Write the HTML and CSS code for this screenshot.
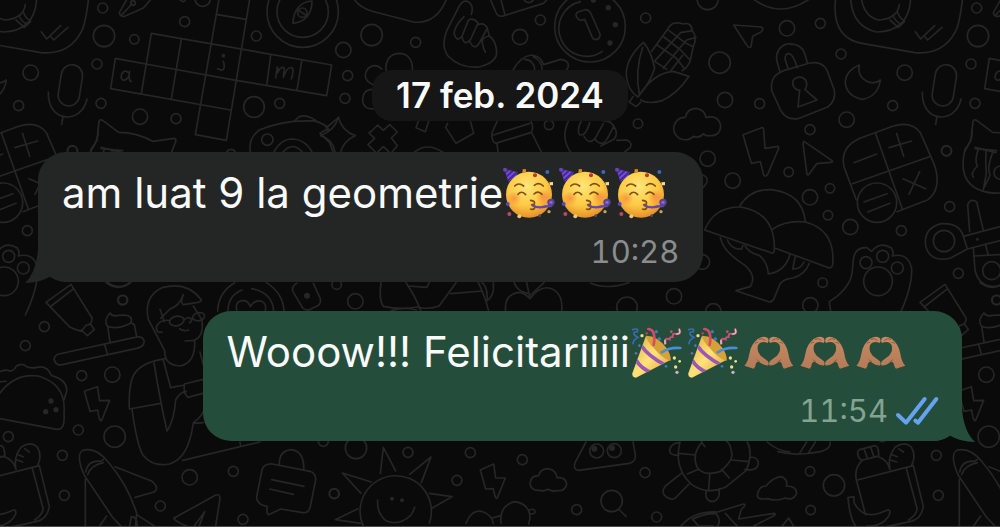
FILE: index.html
```html
<!DOCTYPE html>
<html lang="ro">
<head>
  <meta charset="UTF-8">
  <meta name="viewport" content="width=device-width, initial-scale=1">
  <title>Chat</title>
  <link rel="stylesheet" href="styles.css">
</head>
<body>
  <!-- wallpaper -->
  <svg class="wallpaper" viewBox="0 0 3000 1581" preserveAspectRatio="xMidYMin slice" aria-hidden="true">
    <defs>
      <g id="tile">
        <!-- top left -->
        <g>
          <circle cx="308" cy="24" r="15"/><circle cx="312" cy="108" r="32"/><circle cx="403" cy="118" r="14"/>
          <circle cx="554" cy="65" r="15"/><circle cx="608" cy="-4" r="23"/><circle cx="291" cy="192" r="15"/>
          <circle cx="303" cy="310" r="15"/><circle cx="420" cy="350" r="23"/><circle cx="528" cy="356" r="15"/>
          <circle cx="769" cy="108" r="15"/><circle cx="762" cy="321" r="31"/><circle cx="839" cy="310" r="15"/>
          <circle cx="218" cy="453" r="15"/><circle cx="693" cy="463" r="15"/>
          <path d="M383 -6L358 38Q360 51 374 49L430 24L456 -6M366 44L396 12"/><circle cx="399" cy="9" r="7"/>
          <path d="M540 0q8 8 16 2"/>
          <path d="M454 100L995 195L980 287L708 241L437 192M346 175L332 266L692 330M346 175L437 192M454 100L424 281M544 118L514 296M660 -20L586 404L679 421L752 -20M652 44L738 58M812 166L800 256M905 184L891 270"/>
          <path d="M387 219Q374 206 365 222Q360 240 372 241Q388 238 389 214Q384 240 394 245M670 184Q678 212 662 210L653 206M827 233L832 201Q836 211 832 219Q844 196 853 204L850 232Q862 199 874 203Q884 206 874 237"/>
          <circle cx="670" cy="167" r="3"/>
          <circle cx="908" cy="35" r="107"/><circle cx="908" cy="35" r="77"/>
          <path d="M936 3C901 5 880 30 879 70C914 67 936 43 936 3Z"/><circle cx="907" cy="38" r="14"/><path d="M895 30L918 46"/>
          <path d="M272 455L291 420L297 364Q301 356 309 362L356 397Q410 397 458 424L522 415Q530 416 527 425L514 458M304 446L368 452"/>
          <path d="M752 460Q742 417 778 390Q820 372 880 364L940 362Q978 372 986 388Q970 391 960 400L988 427L1000 458M885 362Q906 333 948 362M978 384L1016 352"/>
          <circle cx="802" cy="419" r="17"/><path d="M820 460Q840 417 878 417Q918 419 938 460M846 460Q878 419 910 460"/>
        </g>

        <!-- top centre -->
        <g transform="translate(990 0)">
          <circle cx="125" cy="105" r="32"/><circle cx="40" cy="150" r="23"/><circle cx="257" cy="127" r="15"/>
          <circle cx="53" cy="227" r="15"/><circle cx="45" cy="295" r="15"/><circle cx="570" cy="111" r="23"/>
          <circle cx="631" cy="60" r="15"/><circle cx="947" cy="54" r="15"/><circle cx="924" cy="371" r="14"/><circle cx="657" cy="375" r="14"/>
          <path d="M70 -6Q85 20 124 33L250 66Q320 74 351 -6"/>
          <path d="M168 212C165 175 185 160 210 160C235 161 250 184 247 212M155 207C133 185 105 203 106 230Q110 249 136 256M133 268Q97 266 98 303Q101 330 135 326"/>
          <path d="M25 352Q36 394 76 407Q40 421 31 460M25 352Q15 390 -28 407Q8 418 15 456"/>
          <path d="M125 393L143 375L160 391L179 374L202 396L184 414L202 437L186 456M125 393L117 399L134 415L114 434L136 456M144 455L160 440L176 455"/>
          <path d="M266 360L258 383L286 395L296 364M353 370L347 382L378 430L431 400L421 363M254 456Q290 426 338 456"/>
          <path d="M424 43Q433 14 412 4Q397 1 387 20L352 88Q331 137 354 168Q392 206 446 201Q494 190 500 162Q500 122 478 108Q460 110 456 125Q459 143 466 157M402 50Q374 78 372 100Q381 129 396 109L415 61Q430 51 444 69L422 118Q403 142 396 110M444 74Q462 66 472 84L448 129Q433 153 420 126M472 86L478 108"/>
          <path d="M480 -4L500 42Q508 52 522 47L640 10L654 -4M512 -4L525 45"/><circle cx="596" cy="-7" r="15"/>
          <circle cx="780" cy="80" r="106"/><path d="M751 5A83 83 0 1 0 817 154"/>
          <path d="M747 59Q732 47 742 37L765 29Q775 27 782 39L810 102Q812 116 798 119Q790 120 786 110L764 58Q755 62 747 59Z"/>
          <g class="dots"><circle cx="790" cy="0" r="8"/><circle cx="835" cy="23" r="8"/><circle cx="856" cy="74" r="8"/><circle cx="840" cy="129" r="8"/></g>
          <path d="M548 212Q572 168 605 165Q635 170 640 194Q667 186 692 178Q720 182 714 202L708 212M584 178Q611 179 614 208M610 170Q636 182 636 208"/>
          <path d="M940 127Q886 176 889 228Q894 273 924 291Q962 246 974 204Q963 152 940 127ZM938 142Q914 215 928 282M909 290L898 306L918 320L932 307M924 291Q970 218 1030 214L1077 229Q1042 282 996 302Q955 314 932 300"/>
          <path d="M965 154L1018 80Q1030 63 1060 72Q1083 65 1087 92Q1103 112 1090 140L1080 185Q1068 208 1056 212M974 184L1010 208M983 136L1038 174L1062 204M998 108L1052 150L1080 180M1012 88L1068 130L1090 140M976 181L1052 98L1087 92M1000 205L1036 160L1070 120L1098 112M1022 213L1058 166"/>
          <path d="M716 362Q690 414 723 458M754 363Q740 388 748 404Q766 411 779 368M762 408Q776 436 795 416L820 371M795 418Q816 443 832 416L852 378M816 362Q843 360 853 382Q866 400 852 418Q830 430 812 438M860 421L890 420Q908 427 901 442L884 456"/>
          <path d="M502 363L486 398Q484 424 497 430L604 397Q612 382 603 364M490 405L600 370M501 430L504 456M606 400L634 456"/>
        </g>

        <!-- top right -->
        <g transform="translate(1980 0)">
          <circle cx="143" cy="-3" r="32"/><circle cx="381" cy="85" r="23"/><circle cx="481" cy="70" r="15"/>
          <circle cx="179" cy="188" r="32"/><circle cx="195" cy="300" r="23"/><circle cx="299" cy="311" r="15"/>
          <circle cx="543" cy="162" r="15"/><circle cx="734" cy="218" r="23"/><circle cx="698" cy="317" r="15"/>
          <circle cx="560" cy="359" r="23"/><circle cx="450" cy="389" r="15"/><circle cx="859" cy="452" r="15"/>
          <path d="M276 -6Q360 60 453 -6"/>
          <path d="M221 75L304 81Q313 88 304 95L278 109L273 140Q268 146 262 138Z"/>
          <path d="M360 216L350 180Q347 143 380 132Q422 128 434 160L442 188M385 208L375 177Q376 157 390 162Q400 166 412 203"/>
          <path d="M370 212L450 189Q487 183 501 211L523 270Q528 304 503 321L414 356Q380 361 363 333L335 272Q330 237 352 222Z"/>
          <path d="M412 270Q395 260 399 242Q408 229 426 232Q444 242 439 260L435 269L471 300L414 321L419 270Z"/>
          <path d="M598 195Q555 213 556 251Q562 290 608 298Q654 289 661 240Q642 255 620 244Q590 226 598 195Z"/>
          <path d="M527 -6Q512 115 610 131L765 158Q850 165 886 95Q898 75 908 -6M572 -6Q576 80 650 96Q748 94 752 -6M604 -6Q612 50 656 60Q712 57 718 14M690 60L715 82L734 64M698 46Q712 72 724 70M712 36Q720 57 732 60M766 95L782 117L824 77M795 111L803 120L846 82"/>
          <rect x="821" y="194" width="64" height="124" rx="32" transform="rotate(9 853 256)"/>
          <path d="M787 276C784 371 887 373 903 297M831 348L827 373"/>
          <path d="M76 352Q81 326 108 325Q135 329 138 352Q177 344 182 378Q180 410 147 407Q136 409 131 401Q117 417 100 409Q86 425 60 416Q39 404 41 380Q50 351 76 352Z"/>
          <path d="M249 404L305 383Q311 382 311 390L315 445L354 439Q358 443 354 450L324 521Q317 533 311 525L301 485L274 490Z"/>
          <path d="M432 424L516 482Q520 487 512 487L470 491L447 523Q439 528 440 516L429 430Z"/>
        </g>

        <!-- middle right -->
        <g transform="translate(2070 390)">
          <circle cx="53" cy="86" r="23"/><circle cx="128" cy="152" r="23"/><circle cx="296" cy="126" r="14"/>
          <circle cx="360" cy="202" r="23"/><circle cx="420" cy="175" r="14"/><circle cx="414" cy="256" r="14"/>
          <circle cx="481" cy="291" r="23"/><circle cx="634" cy="302" r="15"/><circle cx="779" cy="230" r="15"/>
          <circle cx="805" cy="430" r="15"/><circle cx="398" cy="458" r="14"/><circle cx="361" cy="526" r="23"/>
          <circle cx="70" cy="544" r="23"/><circle cx="919" cy="510" r="14"/>
          <circle cx="37" cy="396" r="22"/><path d="M38 135Q64 146 40 172"/>
          <path d="M499 210L462 110Q449 55 506 26L610 -12Q665 -28 691 8L733 104Q757 174 714 209L621 245M487 161L718 80M557 11L637 237M492 98L560 72M597 53L665 33M620 11L641 79M639 146L707 176M689 125L657 193"/>
          <circle cx="561" cy="218" r="59" class="solid"/><path d="M522 216L591 191M533 246L600 220"/>
          <path d="M44 300Q72 230 152 231Q254 248 253 354Q254 376 240 367ZM148 230Q181 176 244 179Q337 190 346 274M249 297Q287 270 346 276Q437 300 428 404Q423 418 412 412L254 354"/>
          <path d="M91 323Q99 365 165 406Q202 439 180 470L138 482L232 514Q246 520 252 506L270 462Q280 447 308 444Q345 435 358 400M112 330Q124 360 155 357L159 346M165 347Q175 368 209 377Q233 399 235 432Q288 423 300 372M316 379L308 417Q332 418 342 396"/>
          <path d="M424 560L418 515Q478 477 486 430L490 390Q494 351 530 353L545 364Q570 332 604 354Q613 369 607 378Q654 366 665 415Q667 472 628 555"/>
          <circle cx="564" cy="454" r="43"/><circle cx="528" cy="398" r="18"/><circle cx="578" cy="379" r="18"/><circle cx="622" cy="414" r="18"/>
          <path d="M832 357L782 384Q720 400 707 347Q700 294 754 281Q809 278 820 319L832 357L1000 314M820 319L960 282M839 305L833 225Q841 203 860 216L880 301M850 355L855 420Q865 467 910 470Q958 464 960 410M886 342L895 376M850 378L930 374"/>
          <circle cx="762" cy="333" r="32"/><circle cx="905" cy="422" r="27"/><circle cx="862" cy="328" r="2"/>
          <path d="M855 52L918 68M864 60Q853 92 862 108Q840 130 850 142M888 64Q886 98 889 130L880 180M908 68Q890 112 900 136L884 170"/>
          <path d="M846 0Q849 30 825 58Q800 160 880 184Q924 196 950 182"/><circle cx="932" cy="128" r="20"/>
        </g>

        <!-- bottom left -->
        <g transform="translate(0 720)">
          <circle cx="369" cy="180" r="14"/><circle cx="133" cy="260" r="15"/><circle cx="76" cy="317" r="15"/>
          <circle cx="245" cy="407" r="15"/><circle cx="337" cy="404" r="23"/><circle cx="235" cy="570" r="15"/>
          <circle cx="344" cy="590" r="32"/><circle cx="25" cy="590" r="15"/><circle cx="187" cy="646" r="15"/>
          <circle cx="193" cy="766" r="15"/><circle cx="481" cy="798" r="15"/><circle cx="569" cy="712" r="23"/>
          <circle cx="700" cy="694" r="15"/><circle cx="729" cy="838" r="15"/><circle cx="1002" cy="761" r="14"/>
          <path d="M318 128Q355 156 392 128M138 187L213 133L276 234Q278 253 257 257L244 274Q222 268 208 260ZM150 201L221 146M244 270L262 287L283 269L271 251"/>
          <path d="M177 342L415 290Q438 294 431 313Q425 322 410 325L187 374Q166 378 162 357Q165 345 177 342ZM314 314L322 342M330 306L323 259Q309 242 330 219Q338 231 354 226L374 225Q399 227 393 248L403 254L410 291M325 260Q357 269 394 248"/>
          <path d="M-30 530L170 568Q196 572 192 520Q200 433 115 408Q30 396 -20 490M-40 440Q0 422 18 424M-10 400Q15 385 30 393Q42 393 49 378Q68 367 80 380Q98 386 111 382Q140 374 155 407Q202 420 200 453L193 478"/>
          <g class="dots"><circle cx="153" cy="483" r="8"/><circle cx="137" cy="515" r="8"/><circle cx="168" cy="509" r="8"/></g>
          <path d="M253 454L292 440L299 482L329 481L305 541Q298 548 293 510L270 514Z"/>
          <path d="M494 332L445 238Q430 170 486 143Q560 123 602 177Q610 184 590 188L550 194Q540 190 550 164Q538 198 510 207L482 235M480 208L493 245M494 332Q494 380 545 377Q586 366 584 304M487 276Q468 282 469 260Q481 236 510 242M580 198L605 238Q614 290 581 301L555 303M539 266Q548 275 566 270"/>
          <ellipse cx="530" cy="243" rx="22" ry="14" transform="rotate(-12 530 243)"/><ellipse cx="596" cy="230" rx="18" ry="12" transform="rotate(-12 596 230)"/><path d="M552 240Q565 226 577 239M568 248Q575 247 574 240"/>
          <path d="M496 356Q432 366 408 395Q385 420 388 507L482 490M462 369Q480 480 501 573Q522 543 527 480Q540 456 559 454M490 360L512 443L553 435M396 508Q410 610 428 644Q459 682 508 672Q566 656 580 548Q604 532 612 510M553 435Q550 460 564 472L608 460M553 432L610 418M600 336L610 375M548 661L780 606M720 606L722 618M580 550L610 548"/>
          <path d="M253 706Q226 645 248 631Q287 620 324 665Q384 735 410 820L406 862M253 706L337 831L366 862M257 696Q264 660 302 664L310 658M263 704Q272 676 310 668M256 718L256 862M345 680L456 724Q480 745 462 756L405 772M320 828L296 862M410 824L466 860M388 862L394 830Q414 832 412 862"/>
          <path d="M521 835L646 766Q660 760 660 776L645 870M521 835Q530 848 570 862M614 815L580 862M614 815L596 862"/>
          <path d="M818 672L930 694Q948 700 947 720L931 800Q926 820 908 818L842 807L806 824Q798 822 802 800Q768 792 770 770L786 690Q792 670 818 672ZM838 676Q836 631 875 629Q914 636 911 690M815 719L912 739M809 747L880 763"/>
        </g>

        <!-- strip between the bubbles -->
        <g transform="translate(600 810)">
          <path d="M53 124Q54 68 104 38M199 38Q250 70 252 124M84 124Q84 76 126 60M155 56Q218 68 221 124M111 124Q102 90 134 92Q146 95 151 110Q163 88 186 94Q202 104 195 124"/>
          <path d="M290 40Q273 50 279 65L308 114Q322 127 338 114Q366 107 361 86L340 40"/><circle cx="321" cy="77" r="9" class="dot"/>
          <circle cx="410" cy="44" r="14"/><circle cx="466" cy="94" r="23"/><circle cx="1281" cy="112" r="31"/><circle cx="1422" cy="79" r="23"/>
          <path d="M543 38Q536 92 550 109Q600 120 650 111Q690 120 718 107L768 38M618 38Q647 80 663 124M624 48L680 52L688 38M752 71L846 63M835 38Q855 78 866 124M846 38Q862 46 862 92Q884 78 880 38M574 122Q612 110 650 120"/>
          <path d="M917 124Q911 75 955 67Q975 69 990 86Q1020 46 1051 55Q1090 68 1085 124M990 86L980 38M988 78L1032 38M982 70Q950 62 943 38M1172 40Q1220 60 1286 38"/>
        </g>

        <!-- bottom centre -->
        <g transform="translate(600 1260)">
          <circle cx="468" cy="84" r="32"/><circle cx="370" cy="64" r="15"/><circle cx="624" cy="97" r="15"/>
          <circle cx="811" cy="98" r="15"/><circle cx="771" cy="181" r="15"/><circle cx="403" cy="221" r="15"/>
          <path d="M491 321A107 107 0 1 1 688 310M541 161L550 82L587 153M629 163L693 111L664 188M688 220L756 230L697 264M514 186L427 159L483 220M474 266L406 299L482 310"/>
          <path d="M533 240Q530 280 558 302Q584 314 608 302Q638 290 644 261"/>
          <g class="dots"><circle cx="576" cy="236" r="6"/><circle cx="606" cy="241" r="6"/></g>
        </g>
        <g transform="translate(1440 1260)">
          <circle cx="127" cy="119" r="15"/><circle cx="495" cy="158" r="15"/><circle cx="290" cy="269" r="15"/><circle cx="530" cy="291" r="15"/>
          <path d="M1 150L41 132L47 174L76 174L52 233Q46 242 40 206L17 207Z"/>
          <path d="M176 167Q181 146 204 146Q229 151 231 173Q257 170 260 192Q256 214 232 212Q218 216 204 208Q190 215 178 211Q153 213 150 190Q152 167 176 167Z"/>
          <path d="M318 66L285 128Q278 149 296 151L448 130Q468 125 466 104L459 66"/><circle cx="350" cy="93" r="21"/><circle cx="403" cy="92" r="21"/>
          <g class="dots"><circle cx="343" cy="86" r="9"/><circle cx="396" cy="84" r="9"/></g>
          <circle cx="395" cy="243" r="32"/><path d="M415 267L438 289"/>
          <path d="M63 310Q57 258 103 245Q150 251 150 294L146 312M148 270Q166 263 165 277Q160 285 148 280M-42 310Q-24 264 10 276Q36 286 40 310M36 294L62 287"/>
          <path d="M600 66Q580 142 634 193Q682 226 736 202L799 151Q820 100 802 66M666 66Q635 102 650 139Q668 171 720 155Q762 121 755 97Q750 66 735 60M596 100L646 105M755 120L806 125M622 162L655 148M689 164L686 210M725 148L748 174M570 90Q572 70 596 68M568 90Q570 107 596 106M812 112Q835 110 835 133Q829 155 795 148M604 160L556 198Q540 218 560 232Q580 244 592 228L626 193M679 212Q672 240 696 245Q722 242 717 206M664 66L675 80"/>
          <path d="M600 321Q640 272 713 276L790 252Q802 253 784 268L776 297L882 280Q892 282 876 290L816 321M638 298Q670 280 708 281Q726 302 710 321M638 298L656 318L700 318M736 280L774 321"/>
          <path d="M862 66Q890 92 930 96"/>
        </g>

        <!-- bottom right -->
        <g transform="translate(2340 1140)">
          <circle cx="90" cy="274" r="14"/><circle cx="162" cy="316" r="32"/><circle cx="92" cy="390" r="14"/>
          <path d="M-68 348Q-65 318 -42 318Q-22 292 6 290Q25 300 19 318Q50 318 50 340Q40 363 16 354Q-10 365 -38 356Q-66 360 -68 348Z"/>
          <path d="M-6 215Q50 230 124 214Q154 205 150 186M60 218L80 186M86 218L106 186M4 441L26 414L42 441"/>
          <path d="M238 209L285 197Q294 198 296 220Q298 228 290 230L248 240Q236 240 233 222Q232 212 238 209ZM252 206L261 232M272 202L281 228M246 242Q222 265 229 300L257 405M292 229Q324 240 330 269M232 300L400 257L430 380Q424 418 390 425L320 440M378 262L411 385Q412 402 386 420M330 267Q322 230 346 201Q374 182 394 201Q410 230 394 258M356 206L370 216M336 224L352 230M330 239L350 246M204 353L222 350L222 368Q248 417 300 399L325 389Q336 394 322 414Q300 441 260 438M204 353Q208 410 228 441"/>
        </g>
      </g>
    </defs>
    <use href="#tile"/>
    <use href="#tile" x="2622"/>
    <use href="#tile" x="-2622"/>
  </svg>

  <!-- shared icons -->
  <svg class="sprite" aria-hidden="true">
    <defs>
      <radialGradient id="skin" cx="45%" cy="32%" r="70%">
        <stop offset="0" stop-color="#ffe579"/><stop offset=".6" stop-color="#fdc943"/><stop offset="1" stop-color="#e58c27"/>
      </radialGradient>
      <radialGradient id="cheek">
        <stop offset="0" stop-color="#f47e3b" stop-opacity=".7"/><stop offset="1" stop-color="#f47e3b" stop-opacity="0"/>
      </radialGradient>
      <linearGradient id="cone" x1="0" y1="0" x2="1" y2="1">
        <stop offset="0" stop-color="#dda93a"/><stop offset=".5" stop-color="#ffe37c"/><stop offset="1" stop-color="#d99a31"/>
      </linearGradient>
      <linearGradient id="hand" x1="0" y1="0" x2="0" y2="1">
        <stop offset="0" stop-color="#c68a64"/><stop offset="1" stop-color="#b47a56"/>
      </linearGradient>
      <clipPath id="hatClip"><path d="M4 2L45 13Q38 29 16 41Z"/></clipPath>
      <clipPath id="coneClip"><path d="M48 32Q98 60 121 105L18 158Q6 158 7 145Z"/></clipPath>
    </defs>
    <symbol id="party-face" viewBox="0 0 168 156">
      <circle cx="78" cy="80" r="69" fill="url(#skin)"/>
      <circle cx="33" cy="91" r="22" fill="url(#cheek)"/><circle cx="122" cy="87" r="24" fill="url(#cheek)"/>
      <g clip-path="url(#hatClip)"><path d="M0 0H50V45H0Z" fill="#7149d3"/><path d="M2 18L20 2M6 30L34 4M11 41L46 9" stroke="#432390" stroke-width="5"/></g>
      <circle cx="6" cy="5" r="6" fill="#6546b8"/>
      <path d="M35 54Q47 42 62 54M94 52Q108 41 121 54" class="brow"/>
      <path d="M45 79Q56 66 68 80M93 78Q105 66 117 79" class="eye"/>
      <path d="M83 97Q98 99 94 108L84 111Q100 111 95 120Q91 127 83 123" class="eye"/>
      <path d="M88 107Q102 119 125 112L148 110V117L128 119Q106 125 88 116Z" fill="#6547a8"/>
      <circle cx="144" cy="103" r="11" fill="#55429d"/><circle cx="144" cy="103" r="5" fill="#8174bd"/>
      <circle cx="96" cy="22" r="6" fill="#c62d36"/><circle cx="133" cy="12" r="6" fill="#3d66b4"/>
      <path d="M59 4L68 3L70 13L58 16Z" fill="#dc8b29"/><path d="M139 43L150 42L150 52L140 52Z" fill="#f2dc86"/>
      <circle cx="14" cy="108" r="6" fill="#5845ba"/><circle cx="19" cy="138" r="6" fill="#b74b64"/>
      <circle cx="49" cy="145" r="6" fill="#e8cf6d"/><circle cx="138" cy="131" r="5" fill="#c4a455"/><circle cx="110" cy="143" r="4" fill="#564a84"/>
    </symbol>
    <symbol id="popper" viewBox="0 0 168 168">
      <path d="M48 32Q98 60 121 105L18 158Q6 158 7 145Z" fill="url(#cone)"/>
      <g clip-path="url(#coneClip)" fill="none" stroke="#9b57b8" stroke-width="11"><path d="M34 62Q54 92 105 120M18 105Q34 132 64 142"/></g>
      <path d="M48 32Q84 32 112 72Q126 98 121 108Q95 100 72 70Q48 46 48 32Z" fill="#d8a138"/>
      <g fill="none" stroke-linecap="round">
        <path d="M55 12Q79 14 71 60" stroke="#d94a66" stroke-width="8"/>
        <path d="M95 82Q118 66 151 69" stroke="#4c8ed6" stroke-width="8"/>
        <path d="M8 14Q27 8 22 20Q6 21 14 31L24 37Q10 44 9 56" stroke="#376bb5" stroke-width="5"/>
        <path d="M148 12Q154 28 140 27Q126 23 128 36Q118 35 119 43Q102 36 107 55" stroke="#c95172" stroke-width="6"/>
        <path d="M148 14Q153 27 140 27M105 46V56" stroke="#efb3c4" stroke-width="5"/>
      </g>
      <g fill="#3e7cc5"><circle cx="79" cy="20" r="5"/><circle cx="88" cy="42" r="5"/><circle cx="28" cy="62" r="4"/><circle cx="108" cy="124" r="4"/></g>
      <g fill="#eee084"><circle cx="36" cy="32" r="5"/><circle cx="133" cy="99" r="5"/><circle cx="149" cy="109" r="4"/><circle cx="137" cy="126" r="5"/></g>
      <circle cx="50" cy="25" r="4" fill="#b93c50"/><circle cx="124" cy="20" r="4" fill="#c45871"/><circle cx="141" cy="142" r="5" fill="#c9b2ce"/><circle cx="18" cy="85" r="4" fill="#7964a6"/>
    </symbol>
    <symbol id="heart-hands" viewBox="0 0 168 168">
      <g id="heart-half">
        <path d="M35 131L7 122Q18 111 22 86Q26 58 48 41Q68 30 78 40Q82 48 77 54Q57 46 48 61Q43 78 56 92L77 108Q82 114 79 121Q70 124 50 110Q42 110 41 119Q40 127 35 131Z" fill="url(#hand)"/>
        <path d="M50 43Q60 38 70 46M38 56Q43 50 48 52M44 104L54 111" fill="none" stroke="#8f593e" stroke-width="3"/>
      </g>
      <use href="#heart-half" transform="translate(161 0) scale(-1 1)"/>
    </symbol>
  </svg>

  <main class="chat">
    <time class="date" datetime="2024-02-17">17 feb. 2024</time>

    <article class="message incoming">
      <p class="text">am luat 9 la geometrie<svg class="emoji" role="img" aria-label="🥳"><use href="#party-face"/></svg><svg class="emoji" role="img" aria-label="🥳"><use href="#party-face"/></svg><svg class="emoji" role="img" aria-label="🥳"><use href="#party-face"/></svg></p>
      <div class="meta"><time datetime="10:28">10:28</time></div>
      <svg class="tail" viewBox="0 0 42 46" aria-hidden="true"><path d="M13 0V12Q11 35 0 45Q15 45 26 38Q32 44 42 44V0Z"/></svg>
    </article>

    <article class="message outgoing">
      <p class="text">Wooow!!! Felicitariiiii<svg class="emoji" role="img" aria-label="🎉"><use href="#popper"/></svg><svg class="emoji" role="img" aria-label="🎉"><use href="#popper"/></svg><svg class="emoji" role="img" aria-label="🫶🏽"><use href="#heart-hands"/></svg><svg class="emoji" role="img" aria-label="🫶🏽"><use href="#heart-hands"/></svg><svg class="emoji" role="img" aria-label="🫶🏽"><use href="#heart-hands"/></svg></p>
      <div class="meta">
        <time datetime="11:54">11:54</time>
        <svg class="ticks" viewBox="0 0 126 84" role="img" aria-label="Citit"><path d="M6 54L30 77L86 6M58 71L66 77L121 6"/></svg>
      </div>
      <svg class="tail" viewBox="0 0 42 46" aria-hidden="true"><path d="M13 0V12Q11 35 0 45Q15 45 26 38Q32 44 42 44V0Z"/></svg>
    </article>
  </main>
</body>
</html>
```

FILE: styles.css
```css
* {
  margin: 0;
  padding: 0;
  box-sizing: border-box;
}

body {
  position: relative;
  min-height: 100vh;
  overflow: hidden;
  background-color: #0a0a0a;
  border-bottom: 1px solid #4a4a4a;
  font-family: Inter, "Liberation Sans", sans-serif;
  color: #fafafa;
}

.wallpaper {
  position: absolute;
  top: 0;
  left: 0;
  width: 100%;
  height: 100%;
  fill: none;
  stroke: #262626;
  stroke-width: 5;
  stroke-linecap: round;
  stroke-linejoin: round;
}

.wallpaper .dots,
.wallpaper .dot {
  fill: #262626;
  stroke: none;
}

.wallpaper .solid {
  fill: #0a0a0a;
}

.sprite {
  position: absolute;
  width: 0;
  height: 0;
}

.chat {
  position: relative;
  display: flex;
  flex-direction: column;
  padding: 70px 38px 0;
}

.date {
  align-self: center;
  margin-bottom: 31px;
  padding: 0 24px;
  border-radius: 20px;
  background-color: #161616;
  font-size: 35px;
  font-weight: 600;
  line-height: 51px;
}

.message {
  position: relative;
  margin-bottom: 29px;
  padding: 12px 24px 6px;
  border-radius: 28px;
}

.incoming {
  align-self: flex-start;
  background-color: #242626;
}

.outgoing {
  align-self: flex-end;
  background-color: #254d3b;
}

.text {
  font-size: 42px;
  line-height: 58px;
}

.incoming .text {
  padding-right: 8px;
}

.outgoing .text {
  padding-right: 28px;
}

.emoji {
  width: 56px;
  height: 56px;
  vertical-align: -14px;
}

/* above the tail */
.meta {
  position: relative;
  z-index: 1;
  display: flex;
  justify-content: flex-end;
  align-items: center;
  gap: 8px;
  margin-top: 6px;
  font-size: 31px;
  font-variant-numeric: tabular-nums;
  line-height: 48px;
  color: #8b8d8d;
}

.outgoing .meta {
  color: #84a391;
}

.ticks {
  width: 42px;
  height: 28px;
  fill: none;
  stroke: #65a3ef;
  stroke-width: 12;
  stroke-linecap: round;
  stroke-linejoin: round;
  overflow: visible;
}

.tail {
  position: absolute;
  bottom: -2px;
  left: -13px;
  width: 42px;
  height: 46px;
  fill: #242626;
}

.outgoing .tail {
  left: auto;
  right: -13px;
  fill: #254d3b;
  transform: scaleX(-1);
}

.brow,
.eye {
  fill: none;
  stroke: #7c5011;
  stroke-width: 5;
  stroke-linecap: round;
}
```
